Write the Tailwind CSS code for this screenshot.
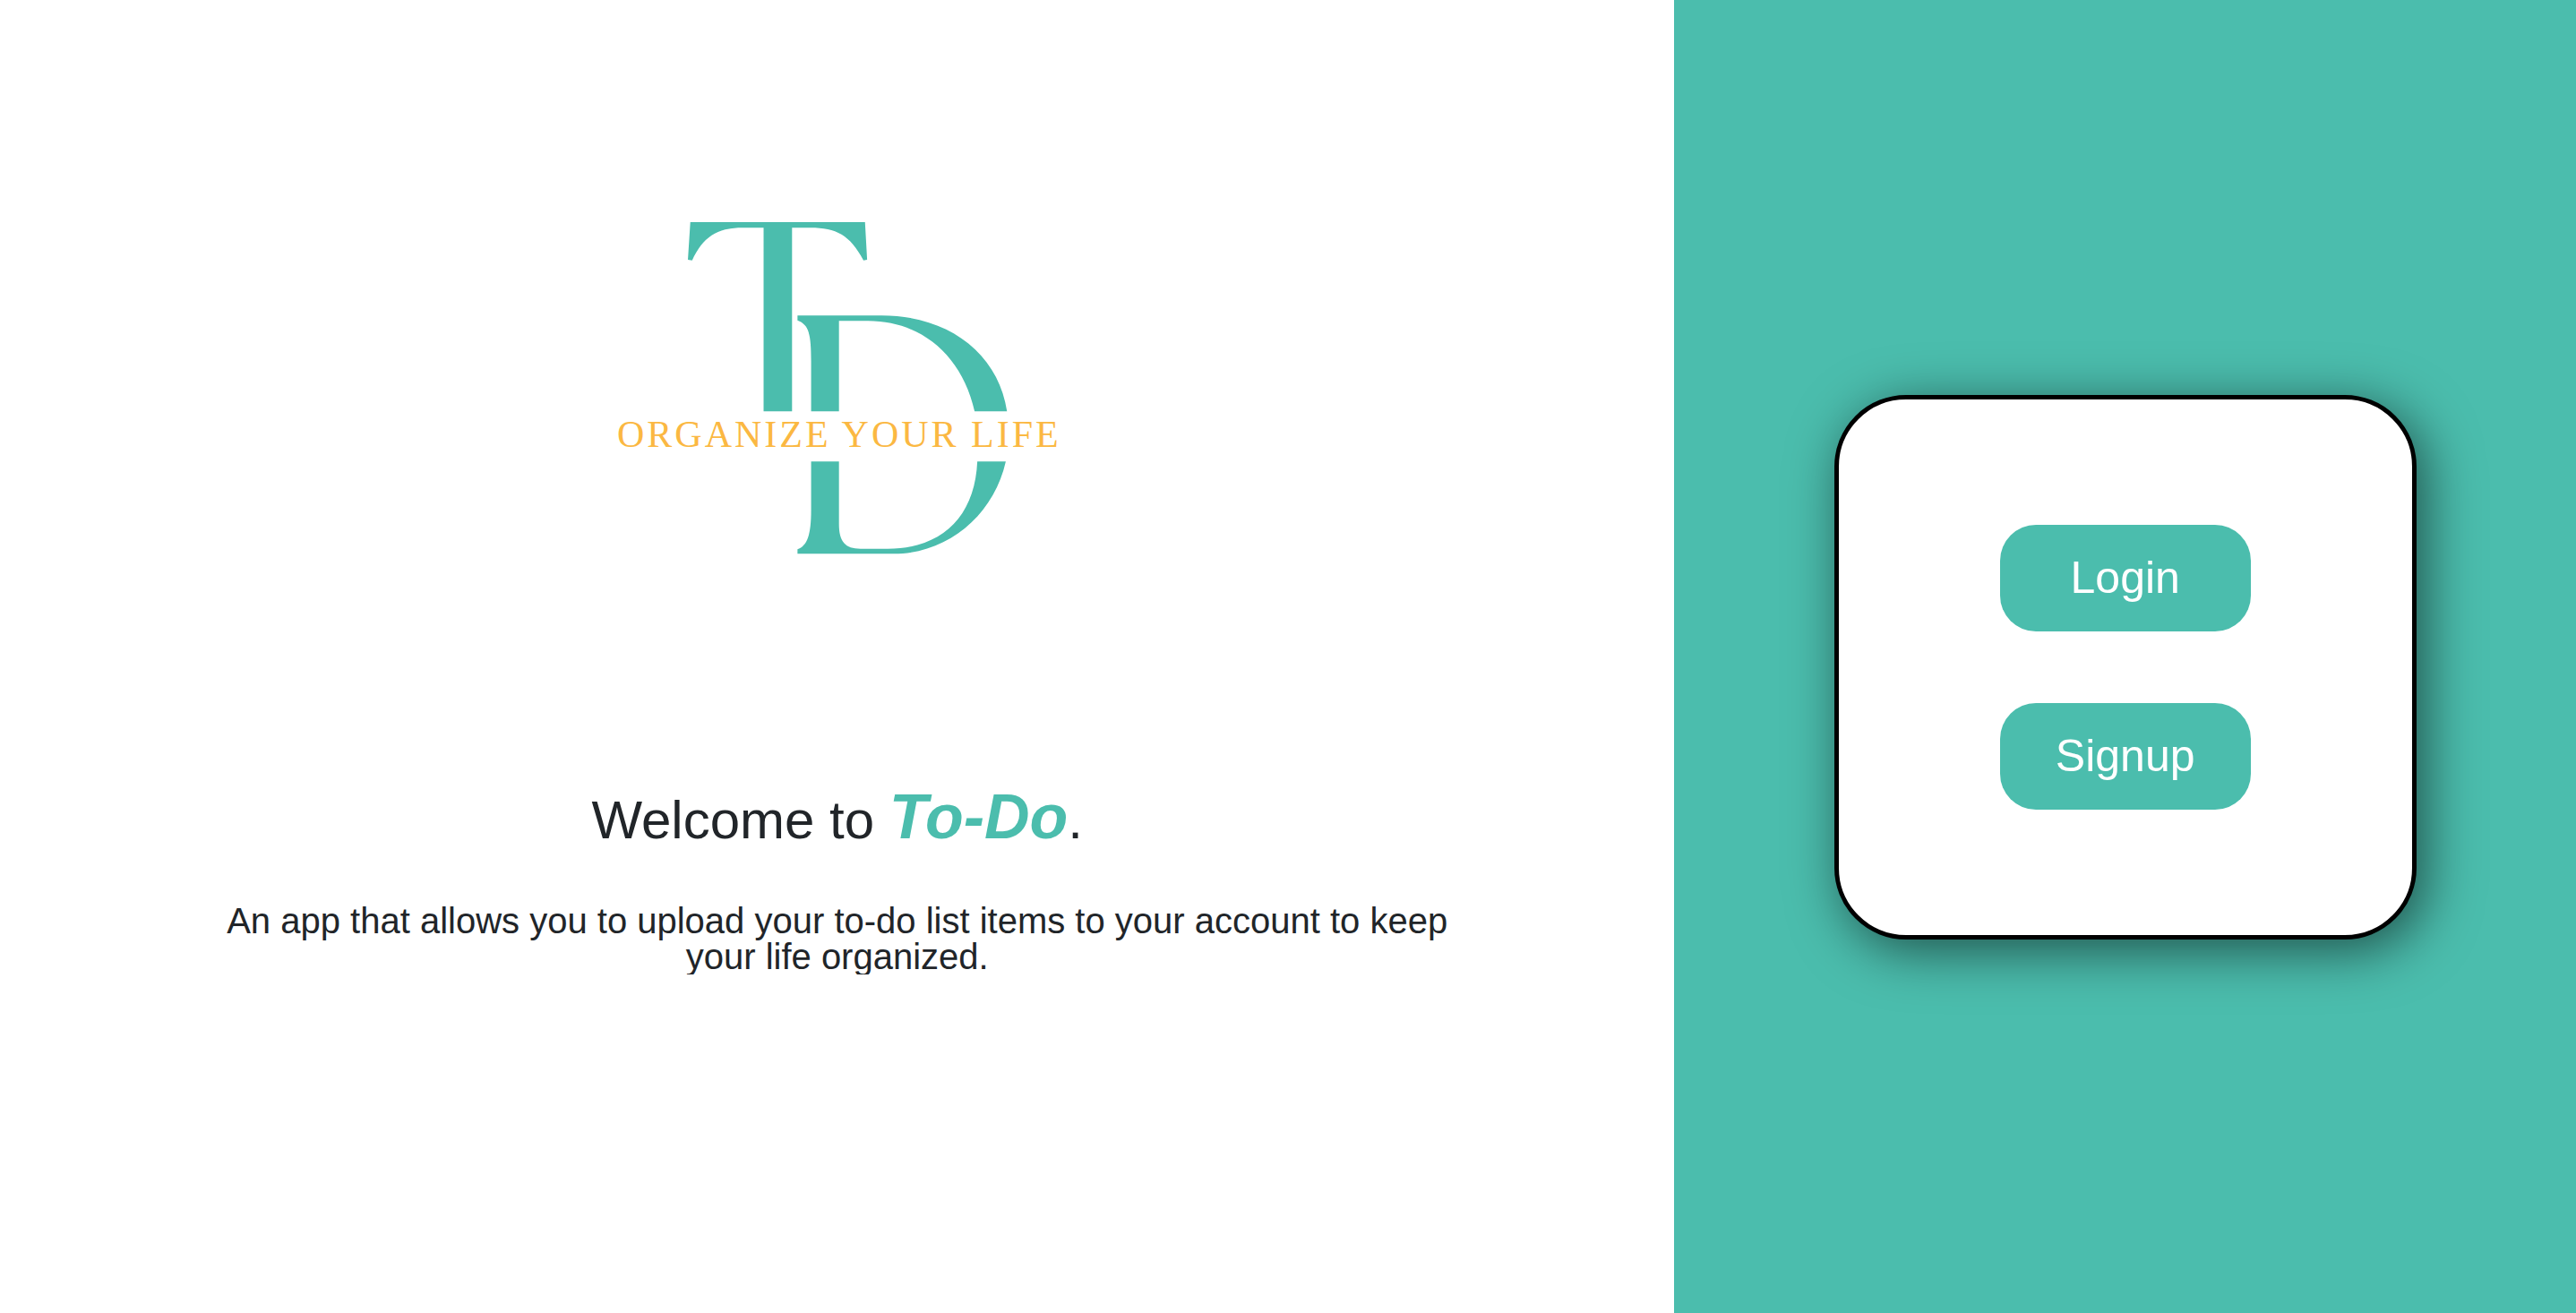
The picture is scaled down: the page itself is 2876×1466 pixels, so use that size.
<!DOCTYPE html>
<html lang="en">
<head>
<meta charset="utf-8">
<title>To-Do</title>
<script src="https://cdn.jsdelivr.net/npm/@tailwindcss/browser@4"></script>
</head>
<body class="flex min-h-screen bg-white font-['Liberation_Sans',Arial,sans-serif] text-[#212529]">
  <main class="flex w-[65%] flex-col items-center pt-[220px] text-center">
    <svg class="h-[420px] w-[530px]" viewBox="0 0 530 420" role="img" aria-label="To-Do, organize your life">
      <g fill="#4bbdad" transform="scale(.338 .3333)">
        <path d="M298 84H875L882 210L870 212C825 127 780 103 695 103H634V718H540V103H470C385 103 340 135 304 212L290 210Z"/>
        <path d="M652 397H930C1150 397 1315 523 1344 718H1237C1195 530 1060 415 885 415H789V718H697V550C697 460 690 427 652 413Z"/>
        <path d="M697 886H789V1095C789 1155 810 1178 860 1178H950C1130 1178 1238 1070 1246 886H1340C1300 1065 1150 1195 970 1195H652V1180C685 1168 697 1130 697 1050Z"/>
      </g>
      <text x="19" y="279" fill="#fbb842" class="font-['Liberation_Serif',serif] text-[42px] tracking-[3px]">ORGANIZE YOUR LIFE</text>
    </svg>
    <h1 class="mt-[236px] text-[60px] leading-[72px]">Welcome to <em class="text-[70px] leading-[72px] font-bold text-[#4bbdad]">To-Do</em>.</h1>
    <p class="mt-14 w-3/4 overflow-hidden text-[40px] leading-[40px]">An app that allows you to upload your to-do list items to your account to keep your life organized.</p>
  </main>
  <aside class="flex w-[35%] items-center justify-center bg-[#4bbdad]">
    <div class="mt-6 flex flex-col gap-20 rounded-[80px] border-5 border-black bg-white px-[180px] py-[140px] shadow-[10px_12px_60px_rgb(0_0_0/0.57)]">
      <button type="button" class="h-[119px] w-[280px] rounded-[40px] bg-[#4bbdad] text-[50px] text-white">Login</button>
      <button type="button" class="h-[119px] w-[280px] rounded-[40px] bg-[#4bbdad] text-[50px] text-white">Signup</button>
    </div>
  </aside>
</body>
</html>
